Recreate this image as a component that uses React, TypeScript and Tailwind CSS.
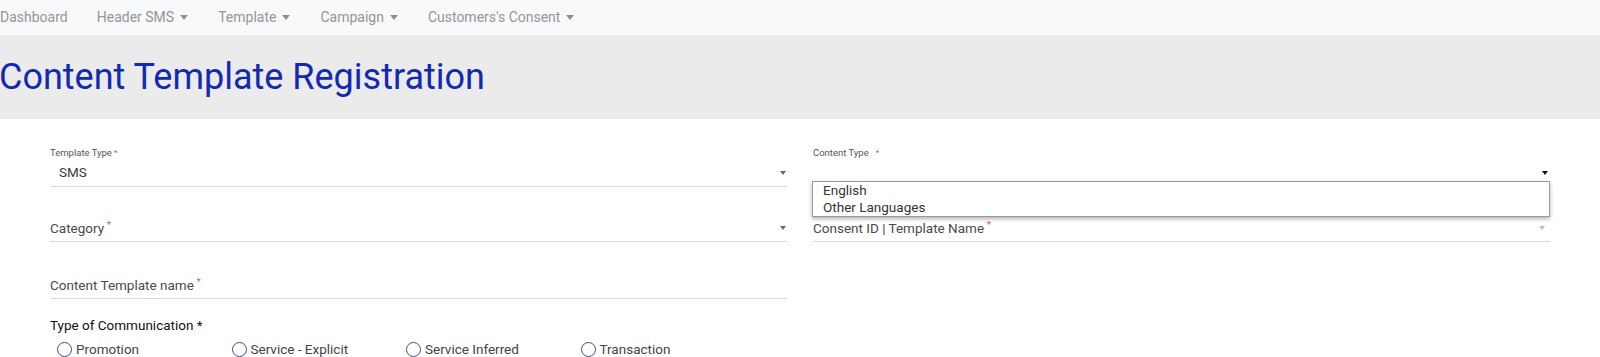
import React from "react";

function NavItem({ label, caret }: { label: string; caret?: boolean }) {
  return (
    <span className="flex items-center whitespace-nowrap">
      {label}
      {caret && (
        <span className="ml-[6px] w-0 h-0 border-x-[4px] border-x-transparent border-t-[5px] border-t-[#909090]" />
      )}
    </span>
  );
}

function Star() {
  return <span className="ml-[3px] text-[9px] text-[#e4474d] self-start leading-[14px]">*</span>;
}

export default function App() {
  return (
    <div className="w-[1600px] h-[357px] overflow-hidden bg-white font-['Roboto',sans-serif]">
      <nav className="h-[35px] bg-[#f8f9fa] flex items-center text-[14px] text-[#959595]">
        <span className="mr-[29px]">
          <NavItem label="Dashboard" />
        </span>
        <div className="flex items-center gap-[30px]">
          <NavItem label="Header SMS" caret />
          <NavItem label="Template" caret />
          <NavItem label="Campaign" caret />
          <NavItem label="Customers's Consent" caret />
        </div>
      </nav>

      <div className="h-[84px] bg-[#ebebeb] flex items-center">
        <h1 className="text-[36px] leading-none text-[#1229b3] whitespace-nowrap ml-[-1px]">Content Template Registration</h1>
      </div>

      <div className="px-[50px] pt-[28px] grid grid-cols-2 gap-x-[26px]">
        {/* Left column */}
        <div className="flex flex-col">
          <div className="h-[12px] flex items-center text-[9.5px] leading-none text-[#555]">
            Template Type<span className="ml-[2px] text-[8px] text-[#e4474d]">*</span>
          </div>
          <div className="h-[28px] flex items-center justify-between border-b border-[#dcdcdc] pl-[9px] pr-[1px]">
            <span className="text-[13.5px] text-[#3a3a3a]">SMS</span>
            <span className="w-0 h-0 border-x-[3.5px] border-x-transparent border-t-[4px] border-t-[#6a6a6a]" />
          </div>

          <div className="mt-[28px] h-[27px] flex items-center justify-between border-b border-[#dcdcdc] pr-[1px]">
            <span className="flex items-center text-[13.5px] text-[#4a4a4a]">
              Category
              <Star />
            </span>
            <span className="w-0 h-0 border-x-[3.5px] border-x-transparent border-t-[4px] border-t-[#6a6a6a]" />
          </div>

          <div className="mt-[30px] h-[27px] flex items-center border-b border-[#dcdcdc]">
            <span className="flex items-center text-[13.5px] text-[#4a4a4a]">
              Content Template name
              <Star />
            </span>
          </div>

          <div className="mt-[17px] h-[18px] flex items-center text-[13.5px] text-[#111]">Type of Communication *</div>

          <div className="mt-[4px] h-[22px] flex items-center pl-[7px] text-[13.5px] text-[#444]">
            {["Promotion", "Service - Explicit", "Service Inferred", "Transaction"].map((t) => (
              <label key={t} className="w-[174.5px] flex items-center shrink-0">
                <span className="w-[15px] h-[15px] rounded-full border-[1.5px] border-[#3f4d8c] shrink-0" />
                <span className="ml-[4px] whitespace-nowrap">{t}</span>
              </label>
            ))}
          </div>
        </div>

        {/* Right column */}
        <div className="flex flex-col">
          <div className="h-[12px] flex items-center text-[9.5px] leading-none text-[#555]">
            Content Type<span className="ml-[7px] text-[8px] text-[#e4474d]">*</span>
          </div>
          <div className="relative h-[28px] flex items-center justify-end border-b border-[#dcdcdc] pr-[2px]">
            <span className="w-0 h-0 border-x-[3.5px] border-x-transparent border-t-[4px] border-t-[#111]" />
            <div className="absolute top-[22px] left-[-1px] right-0 z-10 bg-white border border-[#9a9a9a] shadow-[0_2px_4px_rgba(0,0,0,0.3)] text-[13.5px] text-[#333]">
              <div className="h-[17px] flex items-center pl-[10px]">English</div>
              <div className="h-[17px] flex items-center pl-[10px]">Other Languages</div>
            </div>
          </div>

          <div className="mt-[28px] h-[27px] flex items-center justify-between border-b border-[#dcdcdc] pr-[5px]">
            <span className="flex items-center text-[13.5px] text-[#4a4a4a]">
              Consent ID | Template Name
              <Star />
            </span>
            <span className="w-0 h-0 border-x-[3.5px] border-x-transparent border-t-[4px] border-t-[#bdbdbd]" />
          </div>
        </div>
      </div>
    </div>
  );
}
